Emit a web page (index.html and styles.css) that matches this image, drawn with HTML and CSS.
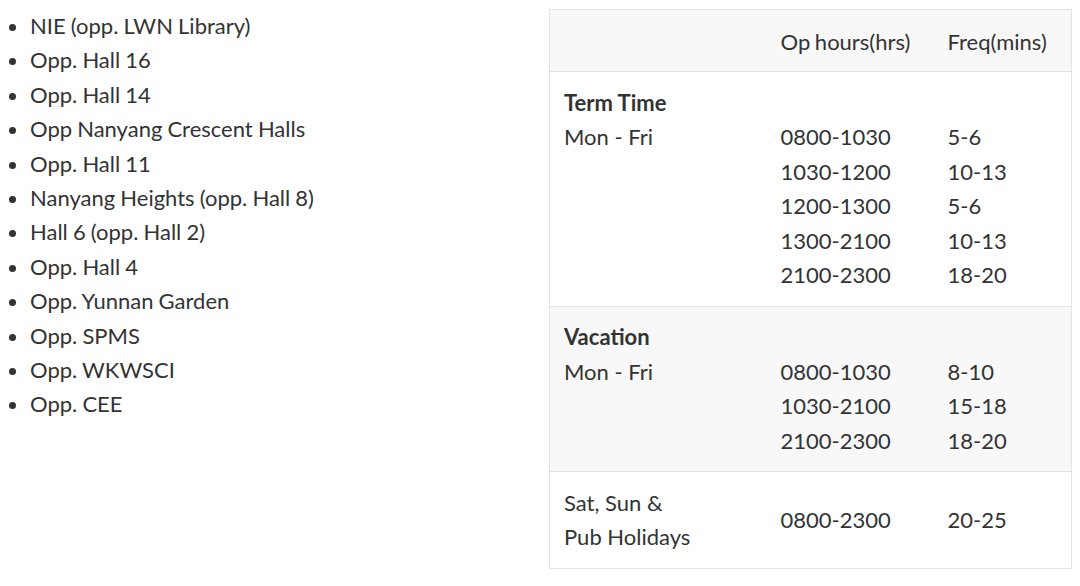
FILE: index.html
```html
<!DOCTYPE html>
<html lang="en">
<head>
<meta charset="utf-8">
<title>Shuttle bus</title>
<link rel="stylesheet" href="styles.css">
</head>
<body>
<div class="page">
  <ul class="stops">
    <li>NIE (opp. LWN Library)</li>
    <li>Opp. Hall 16</li>
    <li>Opp. Hall 14</li>
    <li>Opp Nanyang Crescent Halls</li>
    <li>Opp. Hall 11</li>
    <li>Nanyang Heights (opp. Hall 8)</li>
    <li>Hall 6 (opp. Hall 2)</li>
    <li>Opp. Hall 4</li>
    <li>Opp. Yunnan Garden</li>
    <li>Opp. SPMS</li>
    <li>Opp. WKWSCI</li>
    <li>Opp. CEE</li>
  </ul>
  <table class="hours">
    <colgroup>
      <col class="c1"><col class="c2"><col class="c3">
    </colgroup>
    <thead>
      <tr class="shade">
        <th></th>
        <th>Op hours(hrs)</th>
        <th>Freq(mins)</th>
      </tr>
    </thead>
    <tbody>
      <tr class="term">
        <td><strong>Term Time</strong><br>Mon - Fri</td>
        <td><br>0800-1030<br>1030-1200<br>1200-1300<br>1300-2100<br>2100-2300</td>
        <td><br>5-6<br>10-13<br>5-6<br>10-13<br>18-20</td>
      </tr>
      <tr class="shade vac">
        <td><strong>Vacation</strong><br>Mon - Fri</td>
        <td><br>0800-1030<br>1030-2100<br>2100-2300</td>
        <td><br>8-10<br>15-18<br>18-20</td>
      </tr>
      <tr class="weekend">
        <td>Sat, Sun &amp;<br>Pub Holidays</td>
        <td class="mid">0800-2300</td>
        <td class="mid">20-25</td>
      </tr>
    </tbody>
  </table>
</div>
</body>
</html>
```
FILE: styles.css
```css
html, body {
  margin: 0;
  padding: 0;
  background: #ffffff;
}

body {
  font-family: Lato, "Open Sans", sans-serif;
  font-size: 22px;
  line-height: 34.4px;
  color: #333333;
}

.page {
  display: flex;
  align-items: flex-start;
  padding: 9px 0 0 0;
}

.stops {
  margin: 0;
  padding: 0 0 0 30px;
  width: 519px;
  list-style: disc;
}

.stops li {
  word-spacing: -0.5px;
}

.hours {
  border-collapse: collapse;
  border: 1px solid #e2e2e2;
  width: 523px;
  table-layout: fixed;
  flex: none;
}

.c1 { width: 217px; }
.c2 { width: 167px; }
.c3 { width: auto; }

.hours th,
.hours td {
  text-align: left;
  vertical-align: top;
  padding: 13.5px 14px;
  font-weight: 400;
}

.hours tr {
  border-bottom: 1px solid #e2e2e2;
}

.hours thead th {
  padding: 15px 14px 12px;
  word-spacing: -1px;
}

.shade {
  background: #f8f8f8;
}

.hours strong {
  font-weight: 700;
}

.hours td.mid {
  vertical-align: middle;
}
```
